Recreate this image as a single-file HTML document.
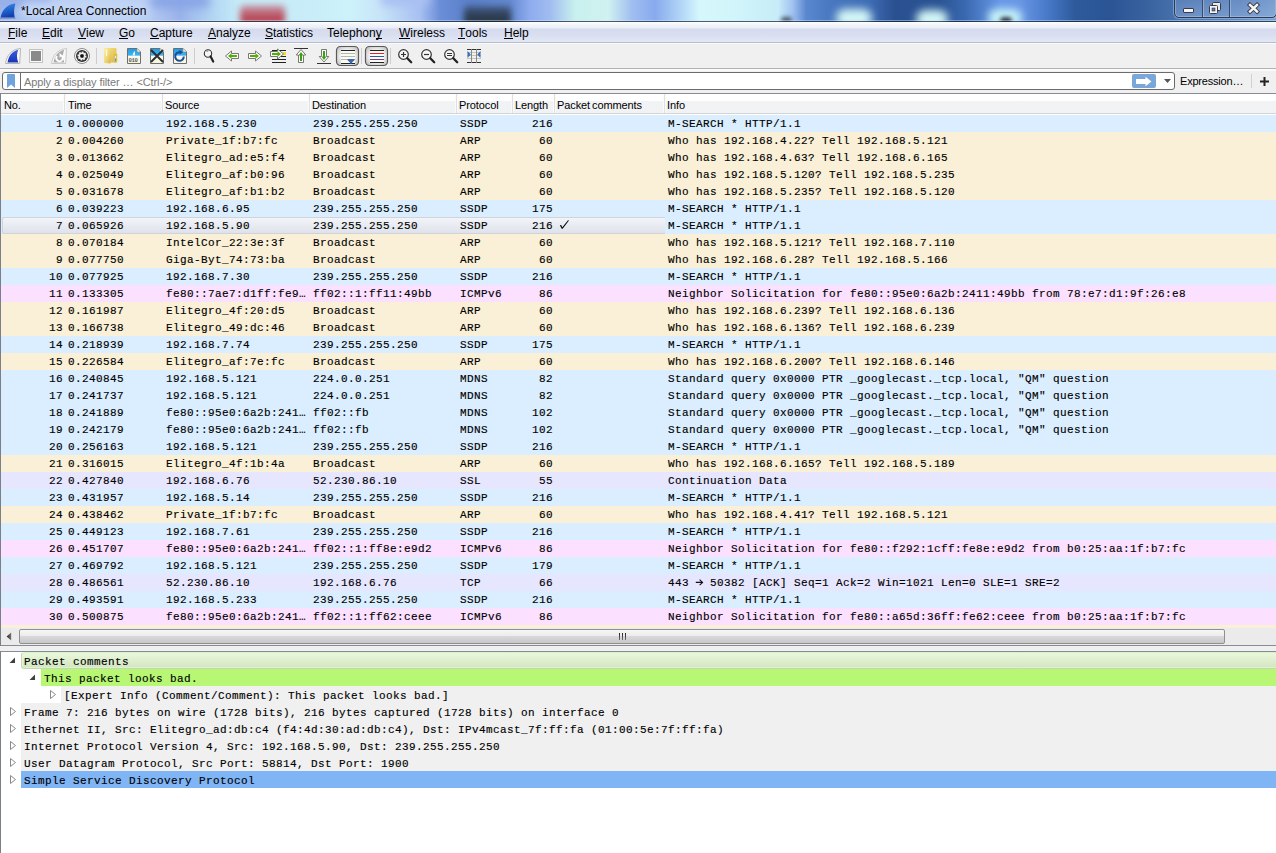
<!DOCTYPE html>
<html><head><meta charset="utf-8"><title>Wireshark</title>
<style>
*{margin:0;padding:0;box-sizing:border-box}
html,body{width:1276px;height:853px;overflow:hidden;background:#f0f0f0;position:relative;font-family:"Liberation Sans",sans-serif}
.abs{position:absolute}
/* title bar */
#title{position:absolute;left:0;top:0;width:1276px;height:22px;overflow:hidden;
 background:linear-gradient(to right,#a2b8ea 0px,#afc6f0 40px,#bcd4f4 100px,#b4cbf2 150px,#9ab2ea 180px,#b4d8f4 215px,#c6ecf8 240px,#c8ecf8 300px,#cdf2fa 350px,#c8e4f8 380px,#a8c0f2 420px,#6a8ed8 440px,#5a80c8 470px,#6488d0 510px,#8eacee 530px,#a0bcf0 550px,#c8f0ee 575px,#d0f2f0 608px,#a0bef0 632px,#88aaee 655px,#b0d4f6 680px,#d6f8fc 700px,#d0f4fa 740px,#c8ecf8 778px,#a0c0f0 793px,#5a88d0 806px,#4a78c0 830px,#3e6cb4 870px,#2a5090 895px,#2a5494 940px,#3a68b0 965px,#6898e8 1000px,#6a96e4 1020px,#4a7ccc 1045px,#2e5a9c 1075px,#2a5494 1110px,#3a64a0 1150px,#4e78b2 1190px,#6088c0 1240px,#78a0d0 1276px);}
#title .b{position:absolute;filter:blur(2.5px)}
#titleline1{position:absolute;left:0;top:20px;width:1276px;height:1px;background:rgba(215,235,250,0.45)}
#titleline2{position:absolute;left:0;top:21px;width:1276px;height:1px;background:rgba(20,35,55,0.72)}
#titletext{position:absolute;left:21px;top:4px;font-size:12px;line-height:14px;color:#000;white-space:nowrap}
/* menu */
#menu{position:absolute;left:0;top:22px;width:1276px;height:20px;background:linear-gradient(to bottom,#ffffff 0px,#f6f7fb 2px,#eaedf6 6px,#d5dbef 7px,#d9dff0 13px,#e1e6f4 19px)}
#menuline{position:absolute;left:0;top:42px;width:1276px;height:1px;background:#b7bdd0}
#menuline2{position:absolute;left:0;top:43px;width:1276px;height:1px;background:#fbfbfb}
.mi{position:absolute;top:26px;font-size:12px;line-height:14px;color:#000;white-space:nowrap}
.mi u{text-decoration:none;position:relative}.mi u::after{content:'';position:absolute;left:0;right:0;top:12px;height:1px;background:#000}
/* toolbar */
#tbline{position:absolute;left:0;top:68px;width:1276px;height:1px;background:#b2b2b2}
#tbline2{position:absolute;left:0;top:69px;width:1276px;height:2px;background:#fafafa}
.sep{position:absolute;top:48px;width:1px;height:16px;background:#c8c8c8}
/* filter */
#filter{position:absolute;left:2px;top:72px;width:1173px;height:18px;border:1px solid #6b6b6b;border-radius:3px;background:#fff}
#bmsep{position:absolute;left:20px;top:73px;width:1px;height:16px;background:#6b6b6b}
#ph{position:absolute;left:24px;top:75px;font-size:11px;line-height:14px;color:#7a7a7a;white-space:nowrap;letter-spacing:-0.1px}
#apply{position:absolute;left:1132px;top:74px;width:24px;height:14px;border-radius:2px;background:#79a7d9}
#expr{position:absolute;left:1180px;top:74px;font-size:11px;line-height:14px;color:#000;white-space:nowrap;letter-spacing:-0.2px}
/* packet list frame */
#plframe{position:absolute;left:0;top:93px;width:1276px;height:553px;border-top:1px solid #868b96;border-left:1px solid #7b8088;border-bottom:1px solid #868b96;background:#fff}
#hdr{position:absolute;left:1px;top:94px;width:1275px;height:20px;background:linear-gradient(to bottom,#ffffff 0px,#ffffff 7px,#f2f3f5 7px,#f1f2f4 19px);border-bottom:1px solid #d5d5d5}
.hs{position:absolute;top:94px;width:1px;height:19px;background:#e0e0e0;box-shadow:-1px 0 0 #fbfbfb,1px 0 0 #fbfbfb}
.ht{position:absolute;top:99px;font-size:11px;line-height:12px;color:#000;white-space:nowrap;letter-spacing:-0.1px;word-spacing:-1px}
.r{position:absolute;left:0px;width:1276px;height:17px;font-family:"Liberation Mono",monospace;font-size:11px;line-height:17px;letter-spacing:0.4px;color:#000;white-space:nowrap;-webkit-text-stroke:0.15px #000}
.r span{position:absolute;top:1px}
.r .no{right:1213px;text-align:right}
.r .len{right:723px;text-align:right}
.u{background:#daeeff}.a{background:#faf0d7}.i{background:#fce0ff}.t{background:#e7e6ff}
.selbox{position:absolute;left:2px;top:0;width:663px;height:17px;border:1px solid #cfd3da;border-right:none;border-radius:2px 0 0 2px;background:linear-gradient(to bottom,#f2f4f9,#dfe2ea)}
/* scrollbar */
#hsb{position:absolute;left:1px;top:628px;width:1275px;height:17px;background:#ebebeb}
#thumb{position:absolute;left:19px;top:629px;width:1206px;height:15px;border:1px solid #8f8f8f;border-radius:2px;background:linear-gradient(to bottom,#f6f6f6 0%,#ececec 45%,#d8d8da 50%,#c8c8cc 100%)}
.grip{position:absolute;top:633px;width:1px;height:7px;background:linear-gradient(#202020,#707070)}
/* splitter */
#split{position:absolute;left:0;top:646px;width:1276px;height:5px;background:#f0f0f0}
#dframe{position:absolute;left:0;top:651px;width:1276px;height:202px;border-top:1px solid #868b96;border-left:1px solid #7b8088;background:#fff}
.d{position:absolute;height:17px;right:0}
.dhov{right:-4px !important;background:linear-gradient(to bottom,#e8f8da,#d4e5c2);border:1px solid #c6d6b4;border-top-color:#dcefcc;border-radius:3px;box-shadow:inset 0 -1px 0 #dff0d0,inset 1px 0 0 #e8f6dc}
.dcom{background:#b7f774}
.dgray{background:#f0f0f0}
.dsel{background:#80b5f5}
.dt{position:absolute;font-family:"Liberation Mono",monospace;font-size:11px;line-height:17px;letter-spacing:0.4px;color:#000;white-space:nowrap;-webkit-text-stroke:0.15px #000}
.arr{position:absolute}

</style></head><body>
<div id="title">
<div class="b" style="left:-10px;top:-6px;width:60px;height:14px;background:#98b0e8;border-radius:8px"></div>
<div class="b" style="left:20px;top:2px;width:130px;height:16px;background:#c4d6f6;border-radius:8px;filter:blur(4px)"></div>
<div class="b" style="left:150px;top:-6px;width:60px;height:14px;background:#88a4e6;border-radius:8px;filter:blur(5px)"></div>
<div class="b" style="left:240px;top:5px;width:45px;height:20px;background:linear-gradient(to bottom,rgba(200,110,130,0.55),#b84858 60%);border-radius:4px;filter:blur(3px)"></div>
<div class="b" style="left:380px;top:-8px;width:50px;height:14px;background:#a8c0f2;border-radius:8px;filter:blur(4px)"></div>
<div class="b" style="left:464px;top:6px;width:47px;height:20px;background:linear-gradient(to bottom,rgba(50,70,100,0.6),#2c3a4a 55%);border-radius:4px;filter:blur(3px)"></div>
<div class="b" style="left:836px;top:9px;width:36px;height:18px;background:#d4f6f6;border-radius:12px;filter:blur(4px)"></div>
<div class="b" style="left:916px;top:10px;width:32px;height:18px;background:#d4f6f6;border-radius:12px;filter:blur(4px)"></div>
<div class="b" style="left:988px;top:9px;width:34px;height:18px;background:#c8f4f8;border-radius:12px;filter:blur(4px)"></div>
<div class="b" style="left:1000px;top:17px;width:12px;height:8px;background:#303848;border-radius:6px;filter:blur(2px)"></div>
<div class="b" style="left:781px;top:17px;width:11px;height:6px;background:#4a5a6a;border-radius:5px;filter:blur(2px)"></div>
</div><div id="titleline1"></div><div id="titleline2"></div>
<svg class="abs" style="left:0;top:0" width="17" height="20" viewBox="0 0 17 20"><defs><linearGradient id="fin" x1="0" y1="0" x2="0.3" y2="1"><stop offset="0" stop-color="#3a90f0"/><stop offset="1" stop-color="#1040b0"/></linearGradient></defs><path d="M0.6 17.6 C1.8 10.5 6.5 4.6 15.4 3.6 C13.9 8 13.7 13 14.7 17.6 Z" fill="url(#fin)"/><rect x="0" y="17.6" width="15.5" height="1" fill="#4a5a88" opacity="0.55"/></svg>
<div id="titletext">*Local Area Connection</div>
<!-- window buttons -->
<div class="abs" style="left:1174px;top:-3px;width:103px;height:21px;border:1px solid #2e3a52;border-radius:0 0 5px 5px;background:linear-gradient(to bottom,rgba(120,150,200,0.30),rgba(150,180,225,0.45));box-shadow:0 0 0 1px rgba(160,190,225,0.55),inset 0 0 0 1px rgba(180,205,235,0.45)"></div>
<div class="abs" style="left:1202px;top:0;width:1px;height:17px;background:#3b4a66;box-shadow:1px 0 0 rgba(200,220,240,0.4)"></div>
<div class="abs" style="left:1229px;top:0;width:1px;height:17px;background:#3b4a66;box-shadow:1px 0 0 rgba(200,220,240,0.4)"></div>
<div class="abs" style="left:1183px;top:8px;width:11px;height:5px;background:#f4f4f4;border:1px solid #3a3a4a;border-radius:1px"></div>
<svg class="abs" style="left:1208px;top:2px" width="14" height="13"><rect x="4.5" y="0.5" width="8" height="8" rx="1" fill="#eaeaea" stroke="#3a3a4a"/><rect x="1.5" y="3.5" width="8" height="8" rx="1" fill="#f4f4f4" stroke="#3a3a4a"/><rect x="4" y="6" width="3" height="3" fill="#5a78a8" stroke="#3a3a4a" stroke-width="0.6"/></svg>
<svg class="abs" style="left:1246px;top:2px" width="15" height="13"><path d="M4 3 L11 9.5 M11 3 L4 9.5" stroke="#3a3a4a" stroke-width="4.4" fill="none" stroke-linecap="square"/><path d="M4 3 L11 9.5 M11 3 L4 9.5" stroke="#f6f6f6" stroke-width="2.4" fill="none" stroke-linecap="square"/></svg>

<div id="menu"></div><div id="menuline"></div><div id="menuline2"></div>
<div class="mi" style="left:8px"><u>F</u>ile</div>
<div class="mi" style="left:42px"><u>E</u>dit</div>
<div class="mi" style="left:78px"><u>V</u>iew</div>
<div class="mi" style="left:119px"><u>G</u>o</div>
<div class="mi" style="left:150px"><u>C</u>apture</div>
<div class="mi" style="left:208px"><u>A</u>nalyze</div>
<div class="mi" style="left:265px"><u>S</u>tatistics</div>
<div class="mi" style="left:327px">Telephon<u>y</u></div>
<div class="mi" style="left:399px"><u>W</u>ireless</div>
<div class="mi" style="left:458px"><u>T</u>ools</div>
<div class="mi" style="left:504px"><u>H</u>elp</div>

<div id="tbline"></div><div id="tbline2"></div>
<svg class="abs" style="left:0;top:0" width="500" height="70" viewBox="0 0 500 70">
<defs>
<linearGradient id="gblue" x1="0" y1="0" x2="0" y2="1"><stop offset="0" stop-color="#3d5fdc"/><stop offset="1" stop-color="#1535b8"/></linearGradient>
<linearGradient id="gfile" x1="0" y1="0" x2="0" y2="1"><stop offset="0" stop-color="#1e9be6"/><stop offset="0.45" stop-color="#3fb2ee"/><stop offset="0.5" stop-color="#fbfbf0"/><stop offset="1" stop-color="#f6f6dc"/></linearGradient>
<linearGradient id="gfold" x1="0" y1="0" x2="1" y2="0"><stop offset="0" stop-color="#f6e6a0"/><stop offset="0.5" stop-color="#fbf4c0"/><stop offset="1" stop-color="#e8cc68"/></linearGradient>
<linearGradient id="gfold2" x1="0" y1="0" x2="1" y2="1"><stop offset="0" stop-color="#f6e48a"/><stop offset="1" stop-color="#dcb840"/></linearGradient><linearGradient id="gfold3" x1="0" y1="0" x2="1" y2="1"><stop offset="0" stop-color="#faf0a8"/><stop offset="0.5" stop-color="#f0da78"/><stop offset="1" stop-color="#d8b444"/></linearGradient><radialGradient id="gbtn" cx="0.5" cy="0.5" r="0.6"><stop offset="0.5" stop-color="#f4f4f4"/><stop offset="1" stop-color="#c4c4c4"/></radialGradient>
</defs>
<!-- start capture fin -->
<path d="M5.5 63.5 C6.5 56 11 49.5 20.5 48.5 L19.7 63.5 Z" fill="#fafafa" stroke="#b4b4b4" stroke-width="1"/>
<path d="M7.5 62.5 C8.5 56 12 51 18.3 49.7 C16.5 53.5 16.5 58 18.3 62.5 Z" fill="url(#gblue)"/>
<!-- stop -->
<rect x="29.5" y="49.5" width="13" height="13" fill="#fafafa" stroke="#c2c2c2"/>
<rect x="31" y="51" width="10" height="10" fill="#8a8a8a"/>
<!-- restart fin (disabled) -->
<path d="M51.5 63.5 C52.5 56 57 49.5 66.5 48.5 L65.7 63.5 Z" fill="#fafafa" stroke="#c8c8c8" stroke-width="1"/>
<path d="M53.5 62.5 C54.5 56 58 51 64.3 49.7 C62.5 53.5 62.5 58 64.3 62.5 Z" fill="#ababab"/>
<path d="M61.5 55.5 A3.2 3.2 0 1 1 57 56" fill="none" stroke="#fff" stroke-width="1.8"/>
<path d="M59.5 53 L62.5 55.5 L59.5 57.5 Z" fill="#fff"/>
<!-- gear -->
<circle cx="82" cy="56" r="7.5" fill="#fafafa" stroke="#8c8c8c" stroke-width="1"/>
<circle cx="82" cy="56" r="6" fill="#2e2e2e"/>
<g transform="translate(82 56) rotate(10)" fill="#f2f2f2">
<circle r="3.2"/>
<rect x="-1" y="-4.5" width="2" height="9"/><rect x="-1" y="-4.5" width="2" height="9" transform="rotate(90)"/>
<rect x="-1" y="-4.5" width="2" height="9" transform="rotate(45)"/><rect x="-1" y="-4.5" width="2" height="9" transform="rotate(-45)"/>
</g>
<rect x="80.3" y="54.3" width="3.4" height="3.4" rx="1" fill="#111"/>
<rect x="96" y="48" width="1" height="16" fill="#cdcdcd"/>
<!-- folder -->
<rect x="104" y="48" width="12.5" height="14.5" rx="1.2" fill="url(#gfold2)"/>
<rect x="114.3" y="53.7" width="2.9" height="8.8" rx="0.6" fill="#e0bc44"/>
<path d="M104 49 Q104 48 105 48 L109.8 48.6 Q110.6 48.8 110.6 49.6 L110.6 63.6 L105 63 Q104 63 104 62 Z" fill="url(#gfold3)"/>
<rect x="106" y="49.6" width="1.1" height="6.5" fill="#ffffff" opacity="0.85"/>
<rect x="115.1" y="56" width="1" height="2.5" fill="#f4f4f4"/>
<rect x="115.1" y="58.5" width="1" height="2.6" fill="#3aa0e8"/>
<!-- file icons -->
<g id="fileA">
<path d="M127.5 48.5 L137 48.5 L140.5 52 L140.5 63.5 L127.5 63.5 Z" fill="url(#gfile)" stroke="#6e6e6e" stroke-width="1"/>
<path d="M137 48.5 L137 52 L140.5 52" fill="#f8f0d8" stroke="#8a8a8a" stroke-width="0.6"/>
</g>
<path d="M132.5 55.5 C133 53 134 51.5 135 51 L135 55.5 Z" fill="#ffffff" opacity="0.85"/>
<text x="128.4" y="61.6" font-family="Liberation Mono" font-size="5.6" fill="#5c5c5c" font-weight="bold" letter-spacing="-0.3">010</text>
<path d="M150.5 48.5 L160 48.5 L163.5 52 L163.5 63.5 L150.5 63.5 Z" fill="url(#gfile)" stroke="#6e6e6e" stroke-width="1"/>
<path d="M160 48.5 L160 52 L163.5 52" fill="#f8f0d8" stroke="#8a8a8a" stroke-width="0.6"/>
<path d="M151.5 50.5 L162.5 61.5 M162.5 50.5 L151.5 61.5" stroke="#2e2e2e" stroke-width="2" stroke-linecap="round"/>
<path d="M173.5 48.5 L183 48.5 L186.5 52 L186.5 63.5 L173.5 63.5 Z" fill="url(#gfile)" stroke="#6e6e6e" stroke-width="1"/>
<path d="M183 48.5 L183 52 L186.5 52" fill="#f8f0d8" stroke="#8a8a8a" stroke-width="0.6"/>
<path d="M183.8 56.5 A4.3 4.3 0 1 1 180.5 52.3" fill="none" stroke="#1c4c9c" stroke-width="2"/>
<path d="M179.5 49.8 L183 52.3 L179.5 54.8 Z" fill="#1c4c9c"/>
<rect x="194" y="48" width="1" height="16" fill="#cdcdcd"/>
<!-- find -->
<circle cx="208" cy="53.5" r="3.7" fill="#f4f4f4" stroke="#333" stroke-width="1.1"/>
<path d="M206.5 52 A1.8 1.8 0 0 1 208.3 51" stroke="#555" stroke-width="0.7" fill="none"/>
<path d="M210.6 56.5 L213.2 61.5" stroke="#222" stroke-width="2.2" stroke-linecap="round"/>
<!-- back -->
<path d="M225.5 56 L231.5 51 L231.5 53.5 L238.5 53.5 L238.5 58.5 L231.5 58.5 L231.5 61 Z" fill="#fff" stroke="#777" stroke-width="1"/>
<path d="M228 56 L231.5 53.2 L231.5 55 L237 55 L237 57 L231.5 57 L231.5 58.8 Z" fill="#52b000"/>
<!-- forward -->
<path d="M261.5 56 L255.5 51 L255.5 53.5 L248.5 53.5 L248.5 58.5 L255.5 58.5 L255.5 61 Z" fill="#fff" stroke="#777" stroke-width="1"/>
<path d="M259 56 L255.5 53.2 L255.5 55 L250 55 L250 57 L255.5 57 L255.5 58.8 Z" fill="#52b000"/>
<!-- go to packet -->
<rect x="272" y="50" width="14" height="1" fill="#222"/>
<rect x="272" y="56" width="14" height="1" fill="#222"/>
<rect x="272" y="59" width="14" height="1" fill="#222"/>
<rect x="272" y="62" width="14" height="1" fill="#222"/>
<rect x="283" y="52" width="3" height="3" fill="#f4dc20"/>
<path d="M283.5 54 L277.5 49 L277.5 51.5 L270.5 51.5 L270.5 56.5 L277.5 56.5 L277.5 59 Z" fill="#fff" stroke="#777" stroke-width="1"/>
<path d="M281 54 L277.5 51.2 L277.5 53 L272 53 L272 55 L277.5 55 L277.5 56.8 Z" fill="#52b000"/>
<!-- first packet -->
<rect x="294" y="48" width="14" height="1" fill="#333"/>
<path d="M301 49.5 L305.8 55 L303.5 55 L303.5 62.5 L298.5 62.5 L298.5 55 L296.2 55 Z" fill="#fff" stroke="#777" stroke-width="1"/>
<path d="M301 52 L303.5 55.5 L302 55.5 L302 61 L300 61 L300 55.5 L298.5 55.5 Z" fill="#3ca010"/>
<!-- last packet -->
<rect x="317" y="63" width="14" height="1" fill="#333"/>
<path d="M324 62 L328.8 56.5 L326.5 56.5 L326.5 49.5 L321.5 49.5 L321.5 56.5 L319.2 56.5 Z" fill="#fff" stroke="#777" stroke-width="1"/>
<path d="M324 60 L326.5 56.5 L325 56.5 L325 51 L323 51 L323 56.5 L321.5 56.5 Z" fill="#3ca010"/>
<!-- autoscroll toggled -->
<rect x="336.5" y="46.5" width="22" height="19" rx="4" fill="url(#gbtn)" stroke="#5a5a5a" stroke-width="1.2"/>
<rect x="341" y="50" width="14" height="14" fill="#fbfbf6"/>
<rect x="341" y="50" width="14" height="1" fill="#222"/>
<rect x="341" y="53" width="14" height="1" fill="#b4b8aa"/>
<rect x="341" y="56" width="14" height="1" fill="#b4b8aa"/>
<rect x="341" y="59" width="14" height="1" fill="#b4b8aa"/>
<rect x="341" y="63" width="14" height="1" fill="#222"/>
<path d="M347.5 59 L354.5 59 Q355 60.5 352.5 62 L351.2 64 L350.8 64 L349.5 62 Q347 60.5 347.5 59 Z" fill="#3568b0"/>
<rect x="361" y="48" width="1" height="16" fill="#cdcdcd"/>
<!-- colorize toggled -->
<rect x="365.5" y="46.5" width="22" height="19" rx="4" fill="url(#gbtn)" stroke="#5a5a5a" stroke-width="1.2"/>
<rect x="370" y="50" width="14" height="13" fill="#fbfbf6"/>
<rect x="370" y="50" width="14" height="1" fill="#222"/>
<rect x="370" y="53" width="14" height="1" fill="#e82222"/>
<rect x="370" y="56" width="14" height="1" fill="#2a5ab0"/>
<rect x="370" y="59" width="14" height="1" fill="#6e3e80"/>
<rect x="370" y="62" width="14" height="1" fill="#222"/>
<rect x="390" y="48" width="1" height="16" fill="#cdcdcd"/>
<!-- zoom in/out/normal -->
<g stroke="#333" fill="none">
<circle cx="403.5" cy="54.5" r="4.8" stroke-width="1.2" fill="#f6f6f6"/>
<path d="M407.3 58.3 L411.2 62.2" stroke="#222" stroke-width="2.3" stroke-linecap="round"/>
<path d="M401 54.5 H406 M403.5 52 V57" stroke-width="1.2"/>
<circle cx="426.5" cy="54.5" r="4.8" stroke-width="1.2" fill="#f6f6f6"/>
<path d="M430.3 58.3 L434.2 62.2" stroke="#222" stroke-width="2.3" stroke-linecap="round"/>
<path d="M424 54.5 H429" stroke-width="1.2"/>
<circle cx="449.5" cy="54.5" r="4.8" stroke-width="1.2" fill="#f6f6f6"/>
<path d="M453.3 58.3 L457.2 62.2" stroke="#222" stroke-width="2.3" stroke-linecap="round"/>
<path d="M447 53.5 H452 M447 55.5 H452" stroke-width="1"/>
</g>
<!-- resize columns -->
<rect x="467" y="49" width="14" height="1" fill="#333"/>
<rect x="467" y="62" width="14" height="1" fill="#333"/>
<rect x="467" y="52" width="14" height="1" fill="#c4c4bc"/>
<rect x="467" y="55" width="14" height="1" fill="#c4c4bc"/>
<rect x="467" y="58" width="14" height="1" fill="#c4c4bc"/>
<rect x="471" y="49" width="1" height="14" fill="#8a8a84"/>
<rect x="476" y="49" width="1" height="14" fill="#8a8a84"/>
<path d="M467.5 51 L470.8 54.5 L467.5 58 Z" fill="#3a6cb8"/>
<path d="M480.5 51 L477.2 54.5 L480.5 58 Z" fill="#3a6cb8"/>
</svg>


<div id="filter"></div><div id="bmsep"></div>
<svg class="abs" style="left:7px;top:74px" width="9" height="14"><path d="M0 1 Q0 0 1 0 L7 0 Q8 0 8 1 L8 14 L4 10.5 L0 14 Z" fill="#6fa3dc"/></svg>
<div id="ph">Apply a display filter &hellip; &lt;Ctrl-/&gt;</div>
<div id="apply"></div>
<svg class="abs" style="left:1135px;top:76px" width="18" height="11"><path d="M1 3 L10.5 3 L10.5 0.8 L16.5 5.5 L10.5 10.2 L10.5 8 L1 8 Z" fill="#fff"/></svg>
<svg class="abs" style="left:1164px;top:79px" width="7" height="4"><path d="M0 0 L7 0 L3.5 4 Z" fill="#555"/></svg>
<div id="expr">Expression&hellip;</div>
<div class="abs" style="left:1251px;top:74px;width:1px;height:14px;background:#d0d0d0"></div>
<svg class="abs" style="left:1260px;top:77px" width="9" height="9"><path d="M4.5 0 V9 M0 4.5 H9" stroke="#222" stroke-width="2"/></svg>

<div id="plframe"></div>
<div id="hdr"></div>
<div class="hs" style="left:64px"></div><div class="hs" style="left:162px"></div><div class="hs" style="left:309px"></div><div class="hs" style="left:456px"></div><div class="hs" style="left:512px"></div><div class="hs" style="left:554px"></div><div class="hs" style="left:664px"></div>
<div class="ht" style="left:4px">No.</div>
<div class="ht" style="left:68px">Time</div>
<div class="ht" style="left:165px">Source</div>
<div class="ht" style="left:312px">Destination</div>
<div class="ht" style="left:459px">Protocol</div>
<div class="ht" style="left:515px">Length</div>
<div class="ht" style="left:557px">Packet comments</div>
<div class="ht" style="left:667px">Info</div>
<div class="r u" style="top:115px"><span class="no">1</span><span style="left:68px">0.000000</span><span style="left:166px">192.168.5.230</span><span style="left:313px">239.255.255.250</span><span style="left:460px">SSDP</span><span class="len">216</span><span style="left:668px">M-SEARCH * HTTP/1.1</span></div>
<div class="r a" style="top:132px"><span class="no">2</span><span style="left:68px">0.004260</span><span style="left:166px">Private_1f:b7:fc</span><span style="left:313px">Broadcast</span><span style="left:460px">ARP</span><span class="len">60</span><span style="left:668px">Who has 192.168.4.22? Tell 192.168.5.121</span></div>
<div class="r a" style="top:149px"><span class="no">3</span><span style="left:68px">0.013662</span><span style="left:166px">Elitegro_ad:e5:f4</span><span style="left:313px">Broadcast</span><span style="left:460px">ARP</span><span class="len">60</span><span style="left:668px">Who has 192.168.4.63? Tell 192.168.6.165</span></div>
<div class="r a" style="top:166px"><span class="no">4</span><span style="left:68px">0.025049</span><span style="left:166px">Elitegro_af:b0:96</span><span style="left:313px">Broadcast</span><span style="left:460px">ARP</span><span class="len">60</span><span style="left:668px">Who has 192.168.5.120? Tell 192.168.5.235</span></div>
<div class="r a" style="top:183px"><span class="no">5</span><span style="left:68px">0.031678</span><span style="left:166px">Elitegro_af:b1:b2</span><span style="left:313px">Broadcast</span><span style="left:460px">ARP</span><span class="len">60</span><span style="left:668px">Who has 192.168.5.235? Tell 192.168.5.120</span></div>
<div class="r u" style="top:200px"><span class="no">6</span><span style="left:68px">0.039223</span><span style="left:166px">192.168.6.95</span><span style="left:313px">239.255.255.250</span><span style="left:460px">SSDP</span><span class="len">175</span><span style="left:668px">M-SEARCH * HTTP/1.1</span></div>
<div class="r u sel" style="top:217px"><div class="selbox"></div><span class="no">7</span><span style="left:68px">0.065926</span><span style="left:166px">192.168.5.90</span><span style="left:313px">239.255.255.250</span><span style="left:460px">SSDP</span><span class="len">216</span><svg style="position:absolute;left:0;top:0" width="600" height="17"><path d="M559.8 8.2 L561.2 8 L562.3 10.2 L568 3.3 L569 3.5 L562.7 11.8 L561.7 11.8 Z" fill="#111"/></svg><span style="left:668px">M-SEARCH * HTTP/1.1</span></div>
<div class="r a" style="top:234px"><span class="no">8</span><span style="left:68px">0.070184</span><span style="left:166px">IntelCor_22:3e:3f</span><span style="left:313px">Broadcast</span><span style="left:460px">ARP</span><span class="len">60</span><span style="left:668px">Who has 192.168.5.121? Tell 192.168.7.110</span></div>
<div class="r a" style="top:251px"><span class="no">9</span><span style="left:68px">0.077750</span><span style="left:166px">Giga-Byt_74:73:ba</span><span style="left:313px">Broadcast</span><span style="left:460px">ARP</span><span class="len">60</span><span style="left:668px">Who has 192.168.6.28? Tell 192.168.5.166</span></div>
<div class="r u" style="top:268px"><span class="no">10</span><span style="left:68px">0.077925</span><span style="left:166px">192.168.7.30</span><span style="left:313px">239.255.255.250</span><span style="left:460px">SSDP</span><span class="len">216</span><span style="left:668px">M-SEARCH * HTTP/1.1</span></div>
<div class="r i" style="top:285px"><span class="no">11</span><span style="left:68px">0.133305</span><span style="left:166px">fe80::7ae7:d1ff:fe9…</span><span style="left:313px">ff02::1:ff11:49bb</span><span style="left:460px">ICMPv6</span><span class="len">86</span><span style="left:668px">Neighbor Solicitation for fe80::95e0:6a2b:2411:49bb from 78:e7:d1:9f:26:e8</span></div>
<div class="r a" style="top:302px"><span class="no">12</span><span style="left:68px">0.161987</span><span style="left:166px">Elitegro_4f:20:d5</span><span style="left:313px">Broadcast</span><span style="left:460px">ARP</span><span class="len">60</span><span style="left:668px">Who has 192.168.6.239? Tell 192.168.6.136</span></div>
<div class="r a" style="top:319px"><span class="no">13</span><span style="left:68px">0.166738</span><span style="left:166px">Elitegro_49:dc:46</span><span style="left:313px">Broadcast</span><span style="left:460px">ARP</span><span class="len">60</span><span style="left:668px">Who has 192.168.6.136? Tell 192.168.6.239</span></div>
<div class="r u" style="top:336px"><span class="no">14</span><span style="left:68px">0.218939</span><span style="left:166px">192.168.7.74</span><span style="left:313px">239.255.255.250</span><span style="left:460px">SSDP</span><span class="len">175</span><span style="left:668px">M-SEARCH * HTTP/1.1</span></div>
<div class="r a" style="top:353px"><span class="no">15</span><span style="left:68px">0.226584</span><span style="left:166px">Elitegro_af:7e:fc</span><span style="left:313px">Broadcast</span><span style="left:460px">ARP</span><span class="len">60</span><span style="left:668px">Who has 192.168.6.200? Tell 192.168.6.146</span></div>
<div class="r u" style="top:370px"><span class="no">16</span><span style="left:68px">0.240845</span><span style="left:166px">192.168.5.121</span><span style="left:313px">224.0.0.251</span><span style="left:460px">MDNS</span><span class="len">82</span><span style="left:668px">Standard query 0x0000 PTR _googlecast._tcp.local, &quot;QM&quot; question</span></div>
<div class="r u" style="top:387px"><span class="no">17</span><span style="left:68px">0.241737</span><span style="left:166px">192.168.5.121</span><span style="left:313px">224.0.0.251</span><span style="left:460px">MDNS</span><span class="len">82</span><span style="left:668px">Standard query 0x0000 PTR _googlecast._tcp.local, &quot;QM&quot; question</span></div>
<div class="r u" style="top:404px"><span class="no">18</span><span style="left:68px">0.241889</span><span style="left:166px">fe80::95e0:6a2b:241…</span><span style="left:313px">ff02::fb</span><span style="left:460px">MDNS</span><span class="len">102</span><span style="left:668px">Standard query 0x0000 PTR _googlecast._tcp.local, &quot;QM&quot; question</span></div>
<div class="r u" style="top:421px"><span class="no">19</span><span style="left:68px">0.242179</span><span style="left:166px">fe80::95e0:6a2b:241…</span><span style="left:313px">ff02::fb</span><span style="left:460px">MDNS</span><span class="len">102</span><span style="left:668px">Standard query 0x0000 PTR _googlecast._tcp.local, &quot;QM&quot; question</span></div>
<div class="r u" style="top:438px"><span class="no">20</span><span style="left:68px">0.256163</span><span style="left:166px">192.168.5.121</span><span style="left:313px">239.255.255.250</span><span style="left:460px">SSDP</span><span class="len">216</span><span style="left:668px">M-SEARCH * HTTP/1.1</span></div>
<div class="r a" style="top:455px"><span class="no">21</span><span style="left:68px">0.316015</span><span style="left:166px">Elitegro_4f:1b:4a</span><span style="left:313px">Broadcast</span><span style="left:460px">ARP</span><span class="len">60</span><span style="left:668px">Who has 192.168.6.165? Tell 192.168.5.189</span></div>
<div class="r t" style="top:472px"><span class="no">22</span><span style="left:68px">0.427840</span><span style="left:166px">192.168.6.76</span><span style="left:313px">52.230.86.10</span><span style="left:460px">SSL</span><span class="len">55</span><span style="left:668px">Continuation Data</span></div>
<div class="r u" style="top:489px"><span class="no">23</span><span style="left:68px">0.431957</span><span style="left:166px">192.168.5.14</span><span style="left:313px">239.255.255.250</span><span style="left:460px">SSDP</span><span class="len">216</span><span style="left:668px">M-SEARCH * HTTP/1.1</span></div>
<div class="r a" style="top:506px"><span class="no">24</span><span style="left:68px">0.438462</span><span style="left:166px">Private_1f:b7:fc</span><span style="left:313px">Broadcast</span><span style="left:460px">ARP</span><span class="len">60</span><span style="left:668px">Who has 192.168.4.41? Tell 192.168.5.121</span></div>
<div class="r u" style="top:523px"><span class="no">25</span><span style="left:68px">0.449123</span><span style="left:166px">192.168.7.61</span><span style="left:313px">239.255.255.250</span><span style="left:460px">SSDP</span><span class="len">216</span><span style="left:668px">M-SEARCH * HTTP/1.1</span></div>
<div class="r i" style="top:540px"><span class="no">26</span><span style="left:68px">0.451707</span><span style="left:166px">fe80::95e0:6a2b:241…</span><span style="left:313px">ff02::1:ff8e:e9d2</span><span style="left:460px">ICMPv6</span><span class="len">86</span><span style="left:668px">Neighbor Solicitation for fe80::f292:1cff:fe8e:e9d2 from b0:25:aa:1f:b7:fc</span></div>
<div class="r u" style="top:557px"><span class="no">27</span><span style="left:68px">0.469792</span><span style="left:166px">192.168.5.121</span><span style="left:313px">239.255.255.250</span><span style="left:460px">SSDP</span><span class="len">179</span><span style="left:668px">M-SEARCH * HTTP/1.1</span></div>
<div class="r t" style="top:574px"><span class="no">28</span><span style="left:68px">0.486561</span><span style="left:166px">52.230.86.10</span><span style="left:313px">192.168.6.76</span><span style="left:460px">TCP</span><span class="len">66</span><span style="left:668px">443   50382 [ACK] Seq=1 Ack=2 Win=1021 Len=0 SLE=1 SRE=2</span><svg style="position:absolute;left:0;top:0" width="720" height="17"><path d="M695.8 8.4 H702.3 M699.6 5.6 L702.6 8.4 L699.6 11.2" stroke="#111" stroke-width="1.1" fill="none"/></svg></div>
<div class="r u" style="top:591px"><span class="no">29</span><span style="left:68px">0.493591</span><span style="left:166px">192.168.5.233</span><span style="left:313px">239.255.255.250</span><span style="left:460px">SSDP</span><span class="len">216</span><span style="left:668px">M-SEARCH * HTTP/1.1</span></div>
<div class="r i" style="top:608px"><span class="no">30</span><span style="left:68px">0.500875</span><span style="left:166px">fe80::95e0:6a2b:241…</span><span style="left:313px">ff02::1:ff62:ceee</span><span style="left:460px">ICMPv6</span><span class="len">86</span><span style="left:668px">Neighbor Solicitation for fe80::a65d:36ff:fe62:ceee from b0:25:aa:1f:b7:fc</span></div>
<div class="r a" style="top:625px;height:3px"></div>
<div id="hsb"></div>
<svg class="abs" style="left:6px;top:632px" width="6" height="9"><defs><linearGradient id="arrg" x1="0" x2="1"><stop offset="0" stop-color="#222"/><stop offset="1" stop-color="#777"/></linearGradient></defs><path d="M5.2 0.6 L0.6 4.5 L5.2 8.4 Z" fill="url(#arrg)"/></svg>
<div id="thumb"></div>
<div class="grip" style="left:619px"></div><div class="grip" style="left:622px"></div><div class="grip" style="left:625px"></div>

<div id="split"></div>
<div id="dframe"></div>
<div class="d dhov" style="top:652px;left:21px"></div><svg class="arr" style="left:9px;top:657px" width="7" height="7"><path d="M6 0.5 L6 6 L0.5 6 Z" fill="#404040"/></svg><span class="dt" style="left:24px;top:654px">Packet comments</span>
<div class="d dcom" style="top:669px;left:41px"></div><svg class="arr" style="left:29px;top:674px" width="7" height="7"><path d="M6 0.5 L6 6 L0.5 6 Z" fill="#404040"/></svg><span class="dt" style="left:44px;top:671px">This packet looks bad.</span>
<div class="d dgray" style="top:686px;left:61px"></div><svg class="arr" style="left:50px;top:690px" width="7" height="10"><path d="M0.5 0.5 L5.5 4.5 L0.5 8.5 Z" fill="none" stroke="#8a8a8a" stroke-width="1"/></svg><span class="dt" style="left:64px;top:688px">[Expert Info (Comment/Comment): This packet looks bad.]</span>
<div class="d dgray" style="top:703px;left:21px"></div><svg class="arr" style="left:10px;top:707px" width="7" height="10"><path d="M0.5 0.5 L5.5 4.5 L0.5 8.5 Z" fill="none" stroke="#8a8a8a" stroke-width="1"/></svg><span class="dt" style="left:24px;top:705px">Frame 7: 216 bytes on wire (1728 bits), 216 bytes captured (1728 bits) on interface 0</span>
<div class="d dgray" style="top:720px;left:21px"></div><svg class="arr" style="left:10px;top:724px" width="7" height="10"><path d="M0.5 0.5 L5.5 4.5 L0.5 8.5 Z" fill="none" stroke="#8a8a8a" stroke-width="1"/></svg><span class="dt" style="left:24px;top:722px">Ethernet II, Src: Elitegro_ad:db:c4 (f4:4d:30:ad:db:c4), Dst: IPv4mcast_7f:ff:fa (01:00:5e:7f:ff:fa)</span>
<div class="d dgray" style="top:737px;left:21px"></div><svg class="arr" style="left:10px;top:741px" width="7" height="10"><path d="M0.5 0.5 L5.5 4.5 L0.5 8.5 Z" fill="none" stroke="#8a8a8a" stroke-width="1"/></svg><span class="dt" style="left:24px;top:739px">Internet Protocol Version 4, Src: 192.168.5.90, Dst: 239.255.255.250</span>
<div class="d dgray" style="top:754px;left:21px"></div><svg class="arr" style="left:10px;top:758px" width="7" height="10"><path d="M0.5 0.5 L5.5 4.5 L0.5 8.5 Z" fill="none" stroke="#8a8a8a" stroke-width="1"/></svg><span class="dt" style="left:24px;top:756px">User Datagram Protocol, Src Port: 58814, Dst Port: 1900</span>
<div class="d dsel" style="top:771px;left:21px"></div><svg class="arr" style="left:10px;top:775px" width="7" height="10"><path d="M0.5 0.5 L5.5 4.5 L0.5 8.5 Z" fill="none" stroke="#8a8a8a" stroke-width="1"/></svg><span class="dt" style="left:24px;top:773px">Simple Service Discovery Protocol</span>
<div class="abs" style="left:0;top:93px;width:1px;height:553px;background:#7b8088;z-index:5"></div>
<div class="abs" style="left:0;top:651px;width:1px;height:202px;background:#7b8088;z-index:5"></div>

</body></html>
